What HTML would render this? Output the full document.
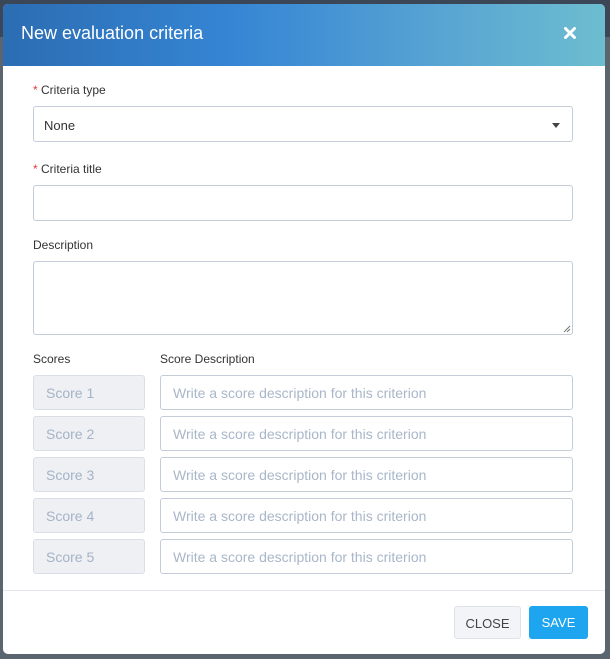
<!DOCTYPE html>
<html><head><meta charset="utf-8"><style>
*{box-sizing:border-box;margin:0;padding:0}
body{width:610px;height:659px;background:#5b6570;font-family:"Liberation Sans",Arial,sans-serif;position:relative;overflow:hidden}
.top{position:absolute;left:0;top:0;width:610px;height:37px;background:#3b4757}
.modal{position:absolute;left:3px;top:4px;width:602px;height:650px;background:#fff;border-radius:5px;overflow:hidden}
.hd{height:62px;background:linear-gradient(90deg,#2c6db3 0%,#3585d4 38%,#5aa6d3 75%,#6dbdd0 100%);position:relative}
.hd h1{position:absolute;left:18px;top:19px;color:#fff;font-size:18px;font-weight:normal}
.x{position:absolute;left:561px;top:23px;width:12px;height:12px}
.lbl{position:absolute;font-size:12px;color:#333}
.lbl .r{color:#e4393c}
.in{position:absolute;border:1px solid #c3ccd8;border-radius:3px;background:#fff;font-size:13px}
.sel{color:#333;padding:11px 10px}
.caret{position:absolute;right:12px;top:16px;width:0;height:0;border-left:4px solid transparent;border-right:4px solid transparent;border-top:5px solid #444}
.sc{position:absolute;left:30px;width:112px;height:35px;background:#eef0f4;border:1px solid #dadfe7;border-radius:3px;color:#a5b3c6;font-size:14px;padding:9px 12px}
.sd{position:absolute;left:157px;width:413px;height:35px;border:1px solid #c3ccd8;border-radius:3px;color:#a9b7c9;font-size:14px;padding:9px 12px}
.ft{position:absolute;left:0;top:586px;width:602px;border-top:1px solid #e3e6ea}
.btn{position:absolute;top:602px;height:33px;border-radius:3px;font-size:13px;text-align:center;line-height:33px}
.close{left:451px;width:67px;background:#f2f4f7;border:1px solid #dfe3e8;color:#444}
.save{left:526px;width:59px;background:#1da5f0;color:#fff}
</style></head><body>
<div class="top"></div>
<div class="modal">
<div class="hd"><h1>New evaluation criteria</h1>
<svg class="x" viewBox="0 0 12 12"><path d="M1.5 1.5L10.5 10.5M10.5 1.5L1.5 10.5" stroke="#fff" stroke-width="3" stroke-linecap="round"/></svg></div>
<div class="lbl" style="left:30px;top:79px"><span class="r">*</span> Criteria type</div>
<div class="in sel" style="left:30px;top:102px;width:540px;height:36px">None<div class="caret"></div></div>
<div class="lbl" style="left:30px;top:158px"><span class="r">*</span> Criteria title</div>
<div class="in" style="left:30px;top:181px;width:540px;height:36px"></div>
<div class="lbl" style="left:30px;top:234px">Description</div>
<div class="in" style="left:30px;top:257px;width:540px;height:74px"><svg style="position:absolute;right:1px;bottom:1px" width="8" height="8" viewBox="0 0 8 8"><path d="M7 1L1 7M7 4L4 7" stroke="#777" stroke-width="1"/></svg></div>
<div class="lbl" style="left:30px;top:348px">Scores</div>
<div class="lbl" style="left:157px;top:348px">Score Description</div>
<div class="sc" style="top:371px">Score 1</div><div class="sd" style="top:371px">Write a score description for this criterion</div>
<div class="sc" style="top:412px">Score 2</div><div class="sd" style="top:412px">Write a score description for this criterion</div>
<div class="sc" style="top:453px">Score 3</div><div class="sd" style="top:453px">Write a score description for this criterion</div>
<div class="sc" style="top:494px">Score 4</div><div class="sd" style="top:494px">Write a score description for this criterion</div>
<div class="sc" style="top:535px">Score 5</div><div class="sd" style="top:535px">Write a score description for this criterion</div>
<div class="ft"></div>
<div class="btn close">CLOSE</div>
<div class="btn save">SAVE</div>
</div>
</body></html>
